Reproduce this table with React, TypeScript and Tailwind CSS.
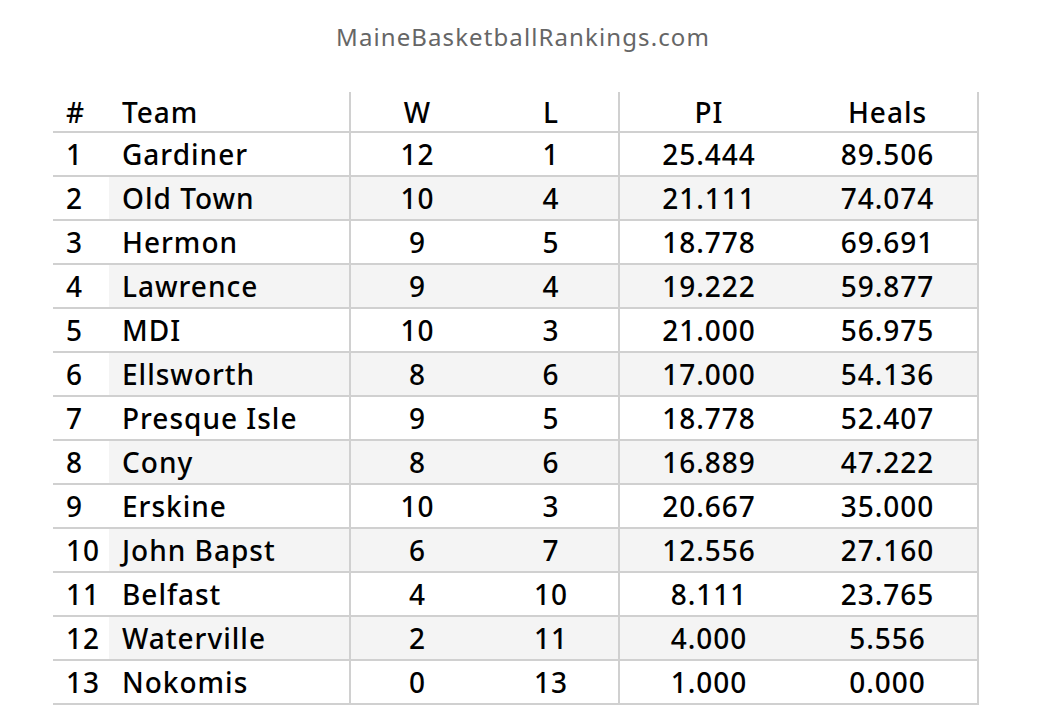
const rows: [number, string, number, number, string, string][] = [
  [1, 'Gardiner', 12, 1, '25.444', '89.506'],
  [2, 'Old Town', 10, 4, '21.111', '74.074'],
  [3, 'Hermon', 9, 5, '18.778', '69.691'],
  [4, 'Lawrence', 9, 4, '19.222', '59.877'],
  [5, 'MDI', 10, 3, '21.000', '56.975'],
  [6, 'Ellsworth', 8, 6, '17.000', '54.136'],
  [7, 'Presque Isle', 9, 5, '18.778', '52.407'],
  [8, 'Cony', 8, 6, '16.889', '47.222'],
  [9, 'Erskine', 10, 3, '20.667', '35.000'],
  [10, 'John Bapst', 6, 7, '12.556', '27.160'],
  [11, 'Belfast', 4, 10, '8.111', '23.765'],
  [12, 'Waterville', 2, 11, '4.000', '5.556'],
  [13, 'Nokomis', 0, 13, '1.000', '0.000'],
];

const cols = 'grid grid-cols-[56px_242px_133px_136px_178px_181px]';

export default function App() {
  return (
    <div className="w-[1046px] h-[722px] bg-white font-['Noto_Sans',sans-serif] text-black">
      {/* title */}
      <div className="pt-[20px] text-center text-[24px] leading-[34px] tracking-[1.1px] text-[#666666]">
        MaineBasketballRankings.com
      </div>

      <div className="ml-[53px] mt-[38px] w-[926px] text-[28px] tracking-[1px] font-[500]">
        {/* header */}
        <div className={`${cols} h-[41px] border-b-2 border-[#d0d0d0]`}>
          <div className="pl-[13px] leading-[40px]">#</div>
          <div className="pl-[13px] leading-[40px] border-r-2 border-[#d0d0d0]">Team</div>
          <div className="text-center leading-[40px]">W</div>
          <div className="text-center leading-[40px] border-r-2 border-[#d0d0d0]">L</div>
          <div className="text-center leading-[40px]">PI</div>
          <div className="text-center leading-[40px] border-r-2 border-[#d0d0d0]">Heals</div>
        </div>

        {rows.map(([rank, team, w, l, pi, heals]) => {
          const shade = rank % 2 === 0 ? 'bg-[#f4f4f4]' : '';
          return (
            <div key={rank} className={`${cols} h-[44px] border-b-2 border-[#d0d0d0]`}>
              <div className="pl-[13px] leading-[42px]">{rank}</div>
              <div className={`pl-[13px] leading-[42px] border-r-2 border-[#d0d0d0] ${shade}`}>{team}</div>
              <div className={`text-center leading-[42px] ${shade}`}>{w}</div>
              <div className={`text-center leading-[42px] border-r-2 border-[#d0d0d0] ${shade}`}>{l}</div>
              <div className={`text-center leading-[42px] ${shade}`}>{pi}</div>
              <div className={`text-center leading-[42px] border-r-2 border-[#d0d0d0] ${shade}`}>{heals}</div>
            </div>
          );
        })}
      </div>
    </div>
  );
}
